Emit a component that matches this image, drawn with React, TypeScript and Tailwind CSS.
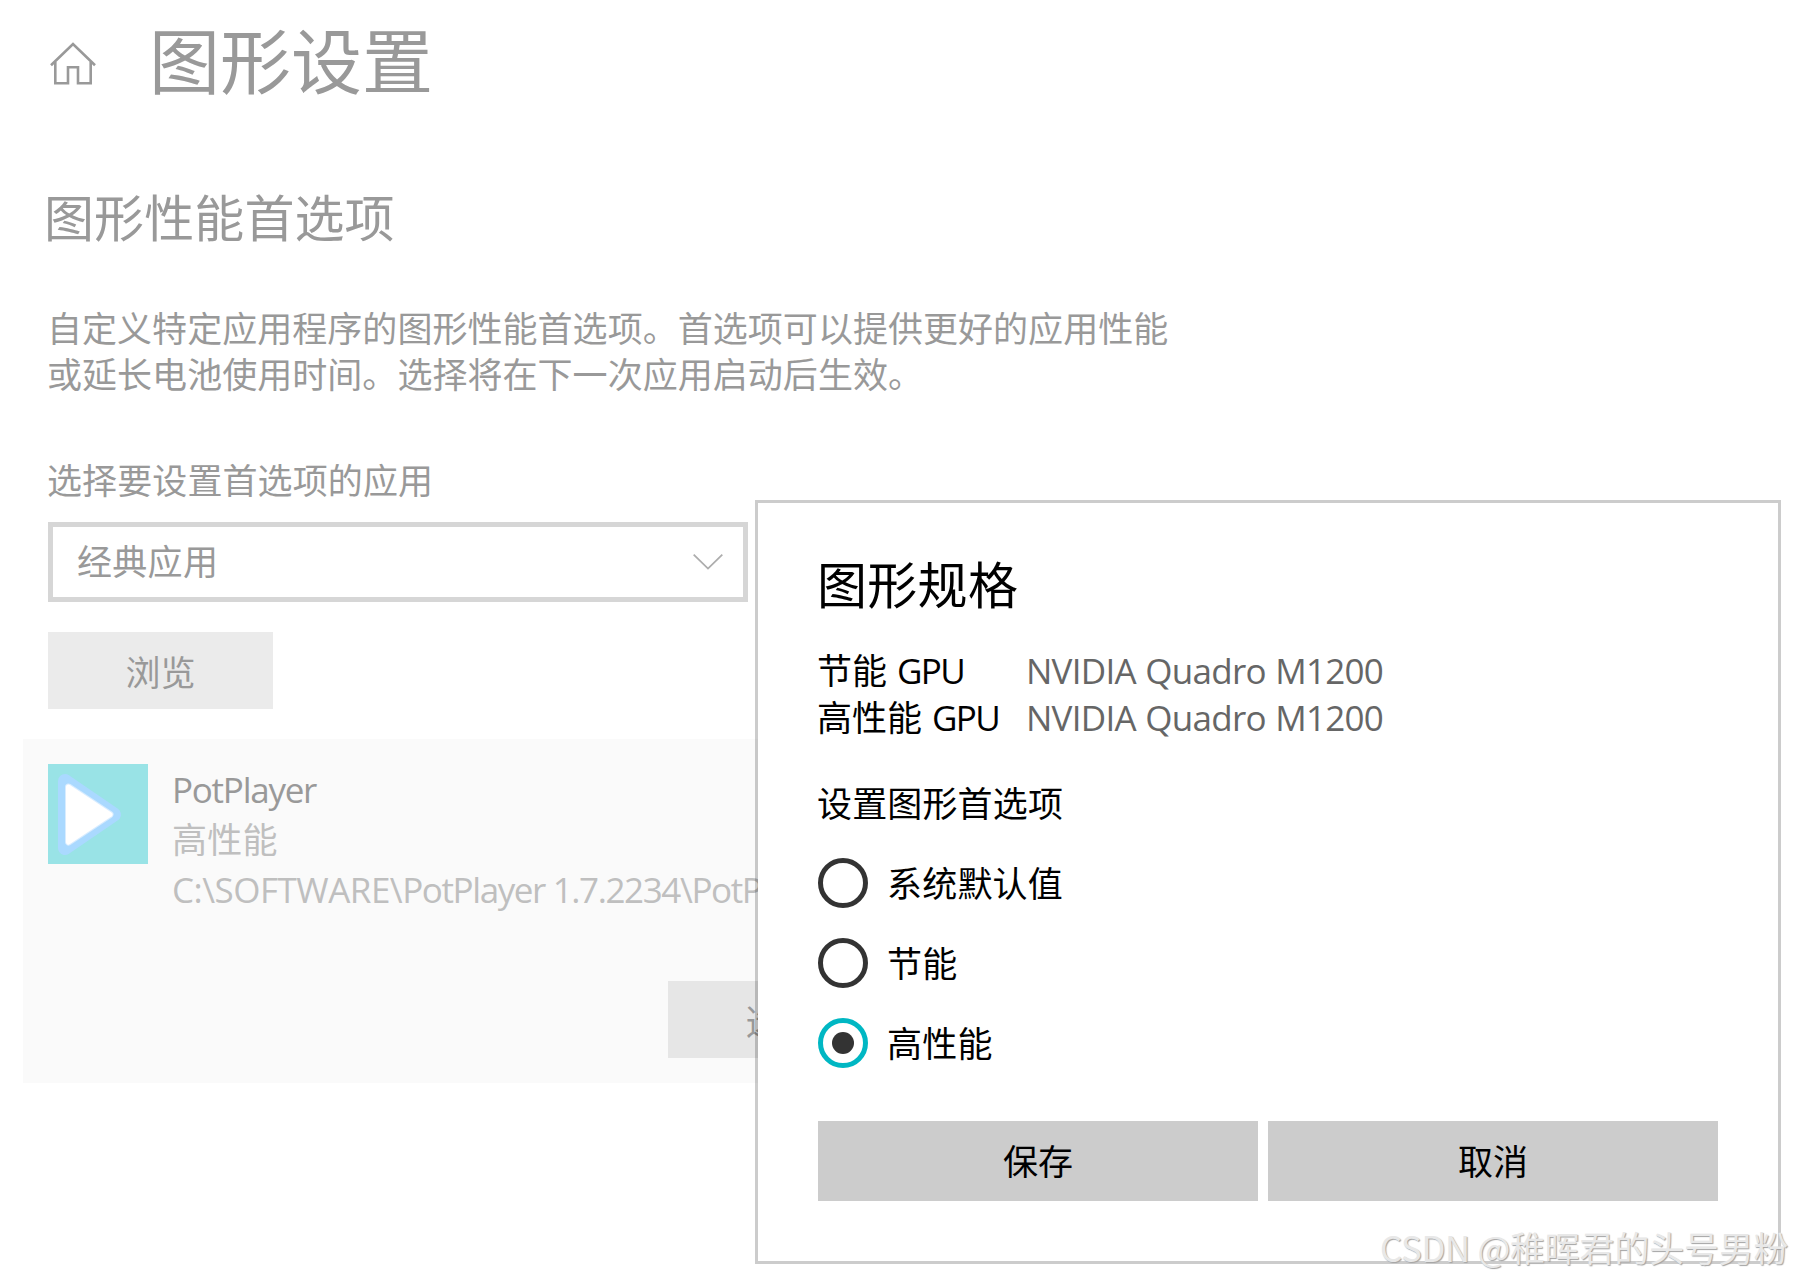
import type { ReactNode } from 'react'

const GPUS = [
  { label: '节能', name: 'NVIDIA Quadro M1200' },
  { label: '高性能', name: 'NVIDIA Quadro M1200' },
] as const

const OPTIONS = [
  { label: '系统默认值', checked: false },
  { label: '节能', checked: false },
  { label: '高性能', checked: true },
] as const

function HomeIcon() {
  return (
    <svg viewBox="0 0 46 43" className="mt-0.5 h-[43px] w-[46px] text-[#999]" fill="none" stroke="currentColor" strokeWidth="2.6">
      <path d="M1 23.2L23 2L45 23.2" />
      <path d="M5.3 20V41.3H18V25.3H28V41.3H40.7V20" />
    </svg>
  )
}

function PlayerIcon() {
  return (
    <svg viewBox="0 0 100 100" className="h-[100px] w-[100px] shrink-0">
      <rect width="100" height="100" fill="#99e3e6" />
      <path d="M17 17L66 50.5L17 84Z" fill="#aad9ff" stroke="#aad9ff" strokeWidth="14" strokeLinejoin="round" />
      <path d="M20.5 23L62 50.5L20.5 78Z" fill="#fff" stroke="#d8ecff" strokeWidth="7" strokeLinejoin="round" />
      <path d="M20.5 23L62 50.5L20.5 78Z" fill="#fff" stroke="#fff" strokeWidth="5" strokeLinejoin="round" />
    </svg>
  )
}

function Radio({ label, checked }: { label: string; checked: boolean }) {
  return (
    <label className="flex h-[50px] items-center gap-[19px]">
      <span
        className={
          checked
            ? 'grid h-[50px] w-[50px] place-items-center rounded-full border-5 border-[#00b7c3]'
            : 'h-[50px] w-[50px] rounded-full border-5 border-[#333]'
        }
      >
        {checked && <span className="h-[22px] w-[22px] rounded-full bg-[#333]" />}
      </span>
      <span className="pt-0.5 tracking-[0.2px]">{label}</span>
    </label>
  )
}

function DialogButton({ children }: { children: ReactNode }) {
  return <button className="h-20 bg-[#ccc] pt-0.5">{children}</button>
}

function GraphicsDialog() {
  return (
    <div className="absolute left-[755px] top-[500px] h-[764px] w-[1026px] border-3 border-black/20 bg-white bg-clip-padding px-[60px] pt-[49px] text-black">
      <h2 className="-ml-px text-[50px] leading-[66px] tracking-[0.3px]">图形规格</h2>

      <dl className="mt-[29px]">
        {GPUS.map((g) => (
          <div key={g.label} className="flex leading-[47px]">
            <dt className="-ml-px w-[209px]">
              {g.label}
              <span className="ml-2.5 tracking-[-1.6px]">GPU</span>
            </dt>
            <dd className="tracking-[-0.75px] text-[#666] [word-spacing:1.2px]">{g.name}</dd>
          </div>
        ))}
      </dl>

      <p className="-ml-px mt-[39px] leading-[47px] tracking-[0.15px]">设置图形首选项</p>
      <div className="mt-[31px] flex flex-col gap-[30px]">
        {OPTIONS.map((o) => (
          <Radio key={o.label} label={o.label} checked={o.checked} />
        ))}
      </div>

      <div className="mt-[53px] grid grid-cols-[440px_450px] gap-2.5">
        <DialogButton>保存</DialogButton>
        <DialogButton>取消</DialogButton>
      </div>
    </div>
  )
}

export default function App() {
  return (
    <div className="relative h-[1279px] w-[1793px] overflow-hidden bg-white font-['Open_Sans','Noto_Sans_CJK_SC',sans-serif] text-[35px] text-[#999]">
      <main className="pl-12">
        <header className="flex h-[124px] items-center pl-0.5">
          <HomeIcon />
          <h1 className="-mt-[3px] ml-[53px] text-[71px] leading-none">图形设置</h1>
        </header>

        <h2 className="-ml-1 mt-[61px] text-[50px] leading-[67px] tracking-[0.1px]">图形性能首选项</h2>
        <p className="-ml-px mt-[54px] leading-[46px] tracking-[0.04px]">
          自定义特定应用程序的图形性能首选项。首选项可以提供更好的应用性能
          <br />
          或延长电池使用时间。选择将在下一次应用启动后生效。
        </p>

        <p className="-ml-px mt-[60px] leading-[46px] tracking-[0.1px]">选择要设置首选项的应用</p>
        <div className="mt-[18px] flex h-20 w-[700px] items-center justify-between border-5 border-[#d6d6d6] pl-6 pr-5">
          <span className="tracking-[0.3px]">经典应用</span>
          <svg viewBox="0 0 30 16" className="h-4 w-[30px] text-[#adadad]" fill="none" stroke="currentColor" strokeWidth="1.8">
            <path d="M0.7 0.7L15 14.6L29.3 0.7" />
          </svg>
        </div>
        <button className="mt-[30px] block h-[77px] w-[225px] bg-[#ebebeb] pt-1.5">浏览</button>

        <section className="-ml-[25px] mt-[30px] h-[344px] w-[895px] bg-[#fafafa] p-[25px]">
          <div className="flex gap-6">
            <PlayerIcon />
            <div className="whitespace-nowrap pt-px leading-[50px] text-[#bfbfbf]">
              <p className="tracking-[-1.25px] text-[#999]">PotPlayer</p>
              <p className="tracking-[0.2px]">高性能</p>
              <p className="tracking-[-1.4px]">
                <span className="tracking-[-0.5px]">C:\SOFTWARE\</span>
                PotPlayer 1.7.2234\PotPlayer.exe
              </p>
            </div>
          </div>
          <div className="mt-[66px] flex justify-end">
            <button className="h-[77px] w-[225px] bg-[#e6e6e6] pt-1.5">选项</button>
          </div>
        </section>
      </main>

      <GraphicsDialog />

      <span className="absolute left-[1380px] top-[1223px] whitespace-nowrap font-['Noto_Sans_CJK_SC',sans-serif] text-[34.8px] leading-[48px] text-[#e8e8e8] [text-shadow:1px_1px_1px_#a3a3a3]">
        <span className="tracking-[-0.3px]">CSDN @</span>
        稚晖君的头号男粉
      </span>
    </div>
  )
}
